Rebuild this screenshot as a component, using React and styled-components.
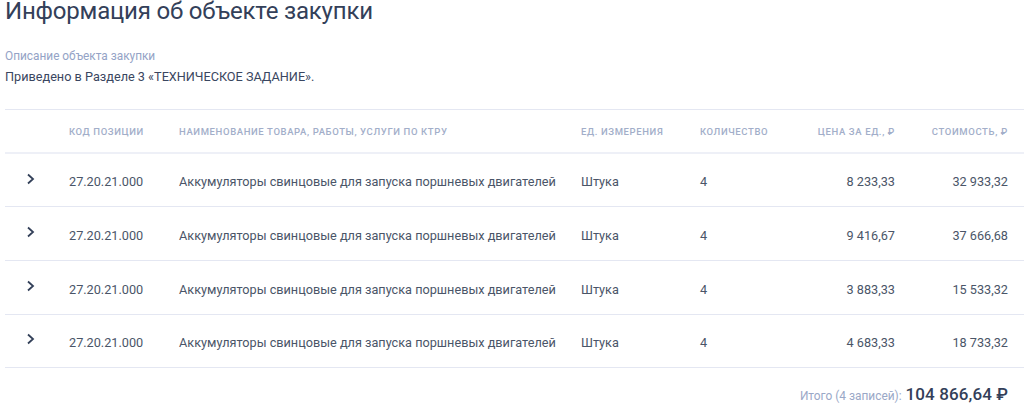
import React from "react";
import styled, { createGlobalStyle } from "styled-components";

const Global = createGlobalStyle`
  html, body { margin: 0; padding: 0; background: #fff; }
  body { font-family: Roboto, "Noto Sans", sans-serif; color: #334059; }
`;
const Page = styled.div`
  width: 1024px;
  height: 417px;
  overflow: hidden;
  padding-left: 5px;
  box-sizing: border-box;
`;
const Title = styled.h1`
  margin: 0;
  font-size: 24px;
  line-height: 23px;
  padding-bottom: 1px;
  font-weight: 400;
  letter-spacing: -0.2px;
  color: #334059;
`;
const Section = styled.div`
  margin-top: 24px;
`;
const Label = styled.div`
  font-size: 11.85px;
  line-height: 16px;
  color: #94a3c6;
`;
const Value = styled.div`
  margin-top: 5px;
  font-size: 12.7px;
  line-height: 16px;
  color: #3a4660;
`;
const Table = styled.div`
  margin-top: 24px;
  border-top: 1px solid #e4e7f2;
`;
const columns = "64px 110px 402px 119px 96px 99px 113px 16px";
const HeadRow = styled.div`
  display: grid;
  grid-template-columns: ${columns};
  height: 40.9px;
  padding-top: 1px;
  align-items: center;
  border-bottom: 2px solid #eef0f7;
`;
const Row = styled.div`
  display: grid;
  grid-template-columns: ${columns};
  height: 53.55px;
  box-sizing: border-box;
  padding-top: 3.5px;
  align-items: center;
  border-bottom: 1px solid #e4e7f2;
`;
const Head = styled.div`
  font-size: 9.5px;
  font-weight: 500;
  letter-spacing: 0.62px;
  text-transform: uppercase;
  color: #a2aec9;
  white-space: nowrap;
  text-align: ${(p) => (p.$right ? "right" : "left")};
`;
const Cell = styled.div`
  font-size: 12.7px;
  color: #4a5568;
  white-space: nowrap;
  text-align: ${(p) => (p.$right ? "right" : "left")};
`;
const Toggle = styled.div`
  display: flex;
  padding-left: 21px;
  margin-top: -6.5px;
  color: #334059;
`;
const Total = styled.div`
  display: flex;
  justify-content: flex-end;
  align-items: baseline;
  gap: 4px;
  margin-top: 16px;
  padding-right: 16px;
`;
const TotalLabel = styled.span`
  font-size: 11.9px;
  color: #9aa8c7;
`;
const TotalValue = styled.span`
  font-size: 17px;
  font-weight: 500;
  letter-spacing: 0.1px;
  color: #334059;
`;

const Chevron = () => (
  <svg width="10" height="12" viewBox="0 0 10 12" fill="none">
    <path d="M2 1.5 L7 6 L2 10.5" stroke="currentColor" strokeWidth="1.8" />
  </svg>
);

const rows = [
  ["8 233,33", "32 933,32"],
  ["9 416,67", "37 666,68"],
  ["3 883,33", "15 533,32"],
  ["4 683,33", "18 733,32"],
];

export default function App() {
  return (
    <Page>
      <Global />
      <Title>Информация об объекте закупки</Title>
      <Section>
        <Label>Описание объекта закупки</Label>
        <Value>Приведено в Разделе 3 «ТЕХНИЧЕСКОЕ ЗАДАНИЕ».</Value>
      </Section>
      <Table>
        <HeadRow>
          <span />
          <Head>Код позиции</Head>
          <Head>Наименование товара, работы, услуги по КТРУ</Head>
          <Head>Ед. измерения</Head>
          <Head>Количество</Head>
          <Head $right>Цена за ед., ₽</Head>
          <Head $right>Стоимость, ₽</Head>
          <span />
        </HeadRow>
        {rows.map(([price, cost]) => (
          <Row key={cost}>
            <Toggle><Chevron /></Toggle>
            <Cell>27.20.21.000</Cell>
            <Cell>Аккумуляторы свинцовые для запуска поршневых двигателей</Cell>
            <Cell>Штука</Cell>
            <Cell>4</Cell>
            <Cell $right>{price}</Cell>
            <Cell $right>{cost}</Cell>
            <span />
          </Row>
        ))}
      </Table>
      <Total>
        <TotalLabel>Итого (4 записей):</TotalLabel>
        <TotalValue>104 866,64 ₽</TotalValue>
      </Total>
    </Page>
  );
}
